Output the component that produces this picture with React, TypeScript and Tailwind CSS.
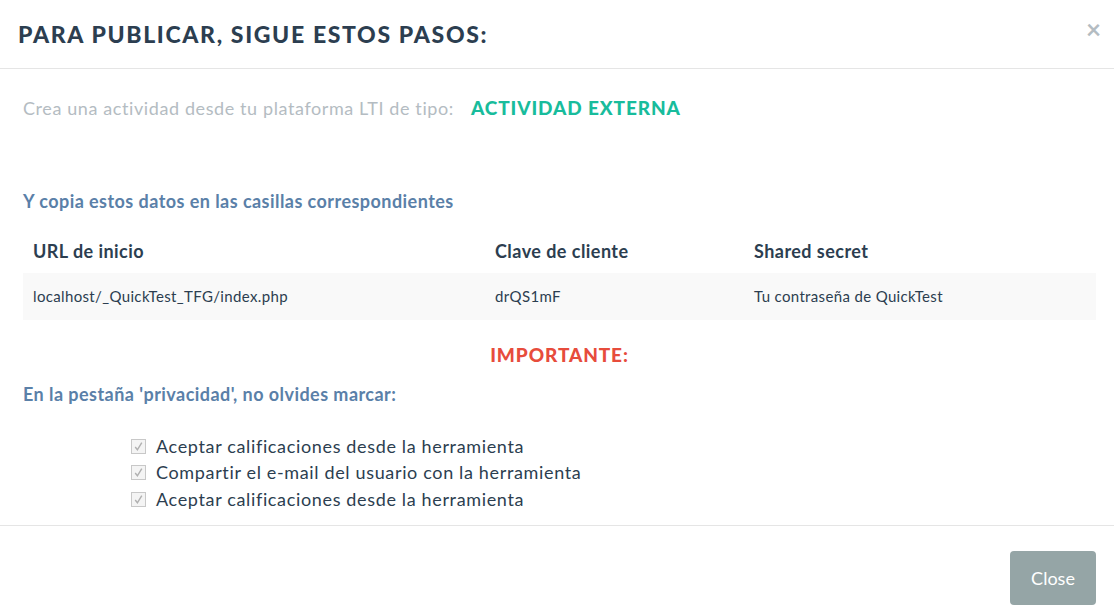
import React from "react";

const lato = { fontFamily: "Lato, 'Noto Sans', sans-serif" };

function Check() {
  return (
    <span className="inline-flex w-[15px] h-[15px] border border-[#c8c8c8] bg-[#f4f4f4] items-center justify-center mr-[10px] shrink-0">
      <svg width="11" height="11" viewBox="0 0 10 10">
        <path d="M2 5.5 L4 8 L8 1.5" fill="none" stroke="#b0b0b0" strokeWidth="1.3" />
      </svg>
    </span>
  );
}

export default function App() {
  const items = [
    "Aceptar calificaciones desde la herramienta",
    "Compartir el e-mail del usuario con la herramienta",
    "Aceptar calificaciones desde la herramienta",
  ];
  return (
    <div className="w-[1114px] h-[616px] bg-white flex flex-col text-[#2c3e50]" style={lato}>
      <div className="h-[69px] border-b border-[#e5e5e5] flex items-center justify-between pl-[18px] pr-[13px] shrink-0">
        <h4 className="text-[23px] font-black tracking-[1.65px] text-[#2c3e50] leading-none">
          PARA PUBLICAR, SIGUE ESTOS PASOS:
        </h4>
        <span className="text-[#b4bcc2] text-[26px] leading-none -mt-[10px] font-bold">×</span>
      </div>
      <div className="flex-1 pl-[23px] pr-[18px] pt-[26px]">
        <div className="flex items-center h-[26px]">
          <span className="text-[18px] text-[#b4bcc2] tracking-[0.6px]">Crea una actividad desde tu plataforma LTI de tipo:</span>
          <span className="ml-[17px] text-[19px] font-black text-[#18bc9c] tracking-[0.9px]">ACTIVIDAD EXTERNA</span>
        </div>
        <div className="mt-[67px] text-[18px] font-bold text-[#5a80a8] h-[26px] flex items-center tracking-[0.45px]">
          Y copia estos datos en las casillas correspondientes
        </div>
        <div className="mt-[15px]">
          <div className="flex h-[44px] items-center text-[18px] font-bold tracking-[0.45px]">
            <div className="w-[462px] pl-[10px]">URL de inicio</div>
            <div className="w-[259px] pl-[10px]">Clave de cliente</div>
            <div className="flex-1 pl-[10px]">Shared secret</div>
          </div>
          <div className="flex h-[47px] items-center bg-[#f9f9f9] text-[15px] tracking-[0.35px]">
            <div className="w-[462px] pl-[10px]">localhost/_QuickTest_TFG/index.php</div>
            <div className="w-[259px] pl-[10px]">drQS1mF</div>
            <div className="flex-1 pl-[10px]">Tu contraseña de QuickTest</div>
          </div>
        </div>
        <div className="mt-[22px] text-center text-[19px] font-black text-[#e74c3c] h-[26px] flex items-center justify-center tracking-[0.9px]">
          IMPORTANTE:
        </div>
        <div className="mt-[13px] text-[18px] font-bold text-[#5a80a8] h-[26px] flex items-center tracking-[0.45px]">
          En la pestaña 'privacidad', no olvides marcar:
        </div>
        <div className="mt-[26px] pl-[108px] flex flex-col">
          {items.map((t, i) => (
            <div key={i} className="flex items-center h-[26.5px] text-[18px] tracking-[0.65px]">
              <Check />
              <span>{t}</span>
            </div>
          ))}
        </div>
      </div>
      <div className="h-[91px] border-t border-[#e5e5e5] flex items-start justify-end pr-[18px] pt-[25px] shrink-0">
        <button className="w-[86px] h-[54px] rounded-[4px] bg-[#95a5a6] text-white text-[18px]">Close</button>
      </div>
    </div>
  );
}
